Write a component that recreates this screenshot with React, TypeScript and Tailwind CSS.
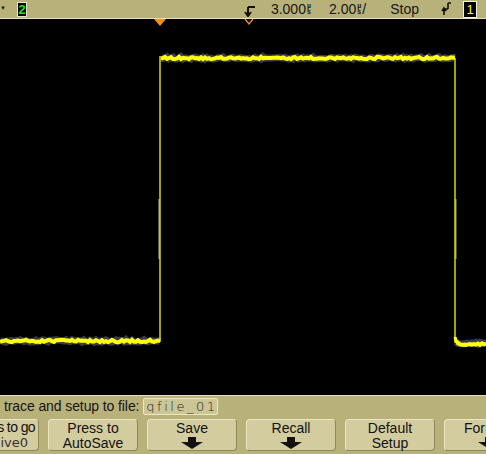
import React from "react";

const font = { fontFamily: '"Liberation Sans Narrow", "Liberation Sans", Arial, sans-serif' };

// deterministic noise for the trace
function rand(seed: number) {
  const x = Math.sin(seed * 12.9898) * 43758.5453;
  return x - Math.floor(x);
}

function tracePath(x0: number, x1: number, y: number, seed: number) {
  const pts: string[] = [];
  for (let x = x0; x <= x1; x += 2) {
    const dy = (rand(x + seed) - 0.5) * 2.4;
    pts.push(`${x},${(y + dy).toFixed(1)}`);
  }
  return pts.join(" ");
}

function Units({ slash }: { slash?: boolean }) {
  return (
    <span className="inline-flex items-center">
      <span className="inline-flex flex-col leading-[6px] text-[7px] font-bold ml-[1px]">
        <span>µ</span>
        <span>s</span>
      </span>
      {slash && <span className="ml-[1px]">/</span>}
    </span>
  );
}

function SoftKey({ children, arrow }: { children: React.ReactNode; arrow?: boolean }) {
  return (
    <div className="w-[90px] h-[32px] shrink-0 rounded-[4px] bg-[#d3cc9f] border border-t-[#ece6c2] border-l-[#ece6c2] border-b-[#8f8758] border-r-[#8f8758] flex flex-col items-center justify-start pt-[1px] text-[14px] leading-[15px] text-[#111]">
      {children}
      {arrow && (
        <svg width="28" height="12" viewBox="0 0 28 12" className="mt-[1px]">
          <path d="M10 0h8v5h7L14 12 3 5h7z" fill="#111" />
        </svg>
      )}
    </div>
  );
}

export default function App() {
  return (
    <div className="w-[486px] h-[454px] bg-[#b9b17a] overflow-hidden flex flex-col" style={font}>
      {/* status bar */}
      <div className="h-[19px] shrink-0 relative flex items-center border-b border-[#e4dfbf] text-[14px] text-[#161616]">
        <span className="absolute left-0 top-[5px] text-[6px] leading-none">▼</span>
        <div className="ml-[17px] w-[10px] h-[15px] bg-black border border-[#e8e4cc] text-[#23e023] text-[13px] leading-[13px] flex items-center justify-center font-bold">
          2
        </div>
        <div className="ml-auto flex items-center">
          <svg width="12" height="12" viewBox="0 0 12 12" className="mr-[15px] mt-[4px]">
            <path d="M4 2h7M4 2v8M1 7l3 4 3-4" stroke="#111" strokeWidth="2" fill="none" />
          </svg>
          <span className="flex items-center">3.000<Units /></span>
          <span className="flex items-center ml-[18px]">2.00<Units slash /></span>
          <span className="ml-[24px]">Stop</span>
          <svg width="10" height="14" viewBox="0 0 10 14" className="ml-[22px]">
            <path d="M3 13V7M3 7h4M7 7V1M7 1h3M1 9l2-3 2 3" stroke="#111" strokeWidth="1.6" fill="none" />
          </svg>
          <div className="ml-[12px] mr-[9px] w-[14px] h-[17px] bg-black border border-[#f2f0e0] text-[#ffff1a] text-[13px] leading-[13px] flex items-center justify-center">
            1
          </div>
        </div>
      </div>

      {/* graticule / waveform */}
      <div className="h-[376px] shrink-0 bg-black relative">
        <svg width="486" height="376" viewBox="0 0 486 376" className="block">
          {/* fringe */}
          <polyline points={tracePath(0, 160, 322, 7)} stroke="#6b6e88" strokeWidth="7" fill="none" opacity="0.55" />
          <polyline points={tracePath(161, 455, 39, 3)} stroke="#6b6e88" strokeWidth="7" fill="none" opacity="0.55" />
          <polyline points={tracePath(456, 486, 324, 11)} stroke="#6b6e88" strokeWidth="7" fill="none" opacity="0.55" />
          {/* edges */}
          <line x1="160" y1="37" x2="160" y2="323" stroke="#d8d800" strokeWidth="1.5" />
          <line x1="159" y1="180" x2="159" y2="240" stroke="#ffffff" strokeWidth="1" opacity="0.7" />
          <line x1="455" y1="39" x2="455" y2="324" stroke="#d8d800" strokeWidth="1.5" />
          <line x1="456" y1="180" x2="456" y2="240" stroke="#ffffff" strokeWidth="1" opacity="0.6" />
          {/* main trace */}
          <polyline points={tracePath(0, 160, 322, 1)} stroke="#ffff10" strokeWidth="4" fill="none" />
          <polyline points={tracePath(161, 455, 39, 5)} stroke="#ffff10" strokeWidth="4" fill="none" />
          <polyline points={tracePath(456, 486, 325, 9)} stroke="#ffff10" strokeWidth="4" fill="none" />
          <path d="M455 318 Q457 328 466 325" stroke="#ffff10" strokeWidth="3" fill="none" />
        </svg>
        {/* trigger position marker */}
        <svg width="12" height="7" viewBox="0 0 12 7" className="absolute left-[154px] top-0">
          <path d="M0 0h12L6 7z" fill="#ff8a1c" />
        </svg>
        <svg width="10" height="6" viewBox="0 0 10 6" className="absolute left-[244px] top-0">
          <path d="M1 0l4 5 4-5" stroke="#ff8a1c" strokeWidth="1.3" fill="none" />
        </svg>
      </div>

      {/* softkey area */}
      <div className="flex-1 border-t border-[#e4dfbf] relative">
        <div className="h-[20px] flex items-center text-[14px] text-[#151515]">
          <span className="ml-[4px] tracking-[-0.1px]">trace and setup to file:</span>
          <div className="ml-[4px] w-[75px] h-[17px] bg-[#ccc596] border border-[#ebe6c6] rounded-[2px] leading-[15px] px-[2px] text-[#222] tracking-[2.5px]" style={{ fontFamily: '"DejaVu Sans", sans-serif', fontWeight: 300, fontSize: 13 }}>
            qfile_01
          </div>
        </div>
        <div className="flex gap-[9px] mt-[3px] ml-[-51px]">
          <div className="w-[90px] h-[32px] shrink-0 rounded-[4px] bg-[#d3cc9f] border border-t-[#ece6c2] border-l-[#ece6c2] border-b-[#8f8758] border-r-[#8f8758] flex flex-col items-end pr-[3px] text-[14px] leading-[15px] text-[#111]">
            <span className="tracking-[-0.6px]">s to go</span>
            <span className="text-[#333] mr-[7px]" style={{ fontFamily: '"DejaVu Sans", sans-serif', fontSize: 13 }}>ive0</span>
          </div>
          <SoftKey>
            <span>Press to</span>
            <span>AutoSave</span>
          </SoftKey>
          <SoftKey arrow>
            <span>Save</span>
          </SoftKey>
          <SoftKey arrow>
            <span>Recall</span>
          </SoftKey>
          <SoftKey>
            <span>Default</span>
            <span>Setup</span>
          </SoftKey>
          <SoftKey arrow>
            <span className="self-start pl-[19px]">Format</span>
          </SoftKey>
        </div>
      </div>
    </div>
  );
}
